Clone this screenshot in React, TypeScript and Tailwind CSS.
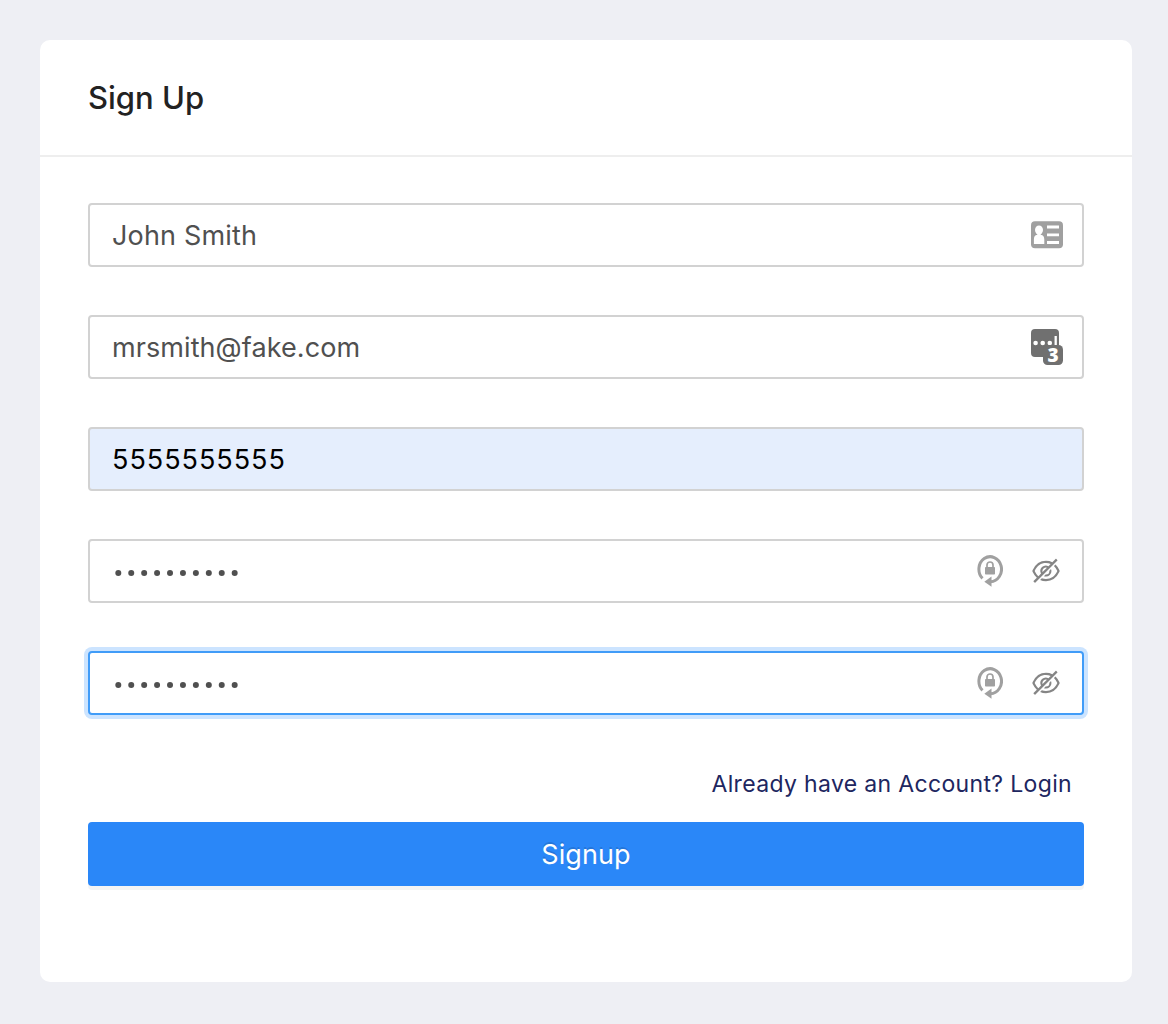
import React from "react";
import { AiOutlineEyeInvisible } from "react-icons/ai";

function ContactCardIcon() {
  return (
    <svg className="block" width="32" height="28" viewBox="0 0 32 28" fill="none">
      <rect x="0" y="0.3" width="32" height="27" rx="4" fill="#a0a0a0" />
      <ellipse cx="8" cy="9" rx="4" ry="4.500" fill="#fff" />
      <path d="M6.300 12h3.400v1.800c2.600.5 3.600 2.200 3.600 4.700V23H2.900v-4.500c0-2.500.8-4.200 3.400-4.700Z" fill="#fff" />
      <path d="M16 6h12M16 13.800h12M16 21.500h12" stroke="#fff" strokeWidth="2.800" />
    </svg>
  );
}

function PasswordManagerIcon() {
  return (
    <span className="relative block h-9 w-8">
      <svg className="block" width="32" height="36" viewBox="0 0 32 36" fill="none">
        <path d="M4 0h20a4 4 0 0 1 4 4v12h-1v12H4a4 4 0 0 1-4-4V4a4 4 0 0 1 4-4Z" fill="#707070" />
        <circle cx="4.600" cy="14" r="2.300" fill="#fff" />
        <circle cx="11.700" cy="14" r="2.300" fill="#fff" />
        <circle cx="18.800" cy="14" r="2.300" fill="#fff" />
        <path d="M24.700 7v10" stroke="#fff" strokeWidth="2.300" />
        <rect x="12" y="16" width="20" height="20" rx="4.500" fill="#707070" />
      </svg>
      <span className="absolute top-[16px] left-[12px] w-5 text-center font-['Open_Sans',sans-serif] text-[19px] leading-[20px] font-extrabold text-white">
        3
      </span>
    </span>
  );
}

function GeneratePasswordIcon() {
  return (
    <svg className="block" width="26" height="34" viewBox="0 0 26 34" fill="none">
      <path d="M5.500 24.350A11.300 12.500 0 1 1 13.500 27.700" stroke="#a0a0a0" strokeWidth="3" />
      <path d="M7.300 27.800 14.500 22.500v10.300Z" fill="#a0a0a0" />
      <rect x="8" y="13" width="10" height="7.500" rx="0.800" fill="#a0a0a0" />
      <path d="M10 13.500V11a3 3 0 0 1 6 0v2.500" stroke="#a0a0a0" strokeWidth="1.700" />
    </svg>
  );
}

function MaskedValue() {
  return (
    <svg className="block" width="130" height="8" viewBox="0 0 130 8" fill="#505050">
      {Array.from({ length: 10 }, (_, i) => (
        <circle key={i} cx={6.3 + i * 12.93} cy="4" r="3" />
      ))}
    </svg>
  );
}

const fieldBase =
  "flex h-16 items-center rounded border-2 pl-[22px] text-[27px] leading-[44px]";

function PasswordField({ focused = false }: { focused?: boolean }) {
  return (
    <div
      className={
        focused
          ? `${fieldBase} border-[#409cf8] bg-white shadow-[0_0_0_4px_#cce4ff]`
          : `${fieldBase} border-[#d2d2d2] bg-white`
      }
    >
      <div className="flex flex-1 items-center pt-[4px]">
        <MaskedValue />
      </div>
      <div className="flex items-center gap-[27px] pr-5">
        <GeneratePasswordIcon />
        <AiOutlineEyeInvisible size={32} color="#858585" />
      </div>
    </div>
  );
}

export default function App() {
  return (
    <main className="min-h-screen bg-[#eeeff4] px-10 pt-10 pr-9 font-['Inter',sans-serif]">
      <section className="h-[942px] w-[1092px] rounded-[10px] bg-white">
        <header className="flex h-[117px] items-center border-b-2 border-[#eeeeee] px-12">
          <h1 className="text-[31px] leading-[44px] font-medium text-[#222222]">
            Sign Up
          </h1>
        </header>
        <form className="px-12 pt-[46px]">
          <div className="flex flex-col gap-12">
            <div className={`${fieldBase} border-[#d2d2d2] bg-white text-[#505050]`}>
              <span className="flex-1 pt-px tracking-[0.180px]">John Smith</span>
              <span className="pr-[19px]">
                <ContactCardIcon />
              </span>
            </div>
            <div className={`${fieldBase} border-[#d2d2d2] bg-white text-[#505050]`}>
              <span className="flex-1 pt-px tracking-[0.080px]">mrsmith@fake.com</span>
              <span className="pr-[19px]">
                <PasswordManagerIcon />
              </span>
            </div>
            <div className={`${fieldBase} border-[#d2d2d2] bg-[#e5eefd] text-black`}>
              <span className="flex-1 pt-px tracking-[0.970px]">5555555555</span>
            </div>
            <PasswordField />
            <PasswordField focused />
          </div>
          <div className="flex h-[107px] justify-end pt-[51px] pr-3">
            <a className="text-[23px] leading-[36px] tracking-[0.340px] text-[#20265f]">
              Already have an Account? Login
            </a>
          </div>
          <button
            type="button"
            className="flex h-16 w-full items-center justify-center rounded bg-[#2a87f8] pt-px text-[27px] leading-[44px] tracking-[0.100px] text-white shadow-[0_4px_0_rgba(0,0,0,0.045)] [text-shadow:0_-2px_0_rgba(0,0,0,0.12)]"
          >
            Signup
          </button>
        </form>
      </section>
    </main>
  );
}
